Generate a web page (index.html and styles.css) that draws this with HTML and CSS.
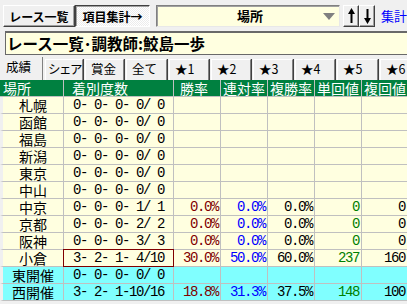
FILE: index.html
```html
<!DOCTYPE html>
<html lang="ja">
<head>
	<meta charset="UTF-8">
	<title>項目集計</title>
	<link rel="stylesheet" href="styles.css">
</head>
<body>
	<div class="toolbar">
		<button class="btn btn-list">レース一覧</button>
		<button class="btn btn-sum">項目集計→</button>
		<div class="combo">
			<span class="combo-text">場所</span>
			<svg class="combo-arrow" width="12" height="7" viewBox="0 0 12 7"><polygon points="0,0 12,0 6,7" fill="#808080"/></svg>
		</div>
		<button class="btn btn-arrow"><svg width="13" height="20" viewBox="0 0 13 20"><polygon points="6.5,2 10,8 7.5,8 7.5,17 5.5,17 5.5,8 3,8" fill="#000"/></svg></button>
		<button class="btn btn-arrow"><svg width="13" height="20" viewBox="0 0 13 20"><polygon points="6.5,18 10,12 7.5,12 7.5,3 5.5,3 5.5,12 3,12" fill="#000"/></svg></button>
		<span class="link">集計</span>
	</div>

	<div class="title">レース一覧･調教師:鮫島一歩</div>

	<ul class="tabs">
		<li class="tab active w43">成績</li>
		<li class="tab w38 narrow">シェア</li>
		<li class="tab w39">賞金</li>
		<li class="tab w41">全て</li>
		<li class="tab w40">★1</li>
		<li class="tab w40">★2</li>
		<li class="tab w40">★3</li>
		<li class="tab w40">★4</li>
		<li class="tab w41">★5</li>
		<li class="tab w40">★6</li>
	</ul>

	<div class="grid">
		<div class="row head">
			<div class="cell">場所</div>
			<div class="cell h-count">着別度数</div>
			<div class="cell h-win">勝率</div>
			<div class="cell">連対率</div>
			<div class="cell">複勝率</div>
			<div class="cell">単回値</div>
			<div class="cell">複回値</div>
		</div>
		<div class="row"><div class="cell place">札幌</div><div class="cell count">0- 0- 0- 0/ 0</div><div class="cell"></div><div class="cell"></div><div class="cell"></div><div class="cell"></div><div class="cell"></div></div>
		<div class="row"><div class="cell place">函館</div><div class="cell count">0- 0- 0- 0/ 0</div><div class="cell"></div><div class="cell"></div><div class="cell"></div><div class="cell"></div><div class="cell"></div></div>
		<div class="row"><div class="cell place">福島</div><div class="cell count">0- 0- 0- 0/ 0</div><div class="cell"></div><div class="cell"></div><div class="cell"></div><div class="cell"></div><div class="cell"></div></div>
		<div class="row"><div class="cell place">新潟</div><div class="cell count">0- 0- 0- 0/ 0</div><div class="cell"></div><div class="cell"></div><div class="cell"></div><div class="cell"></div><div class="cell"></div></div>
		<div class="row"><div class="cell place">東京</div><div class="cell count">0- 0- 0- 0/ 0</div><div class="cell"></div><div class="cell"></div><div class="cell"></div><div class="cell"></div><div class="cell"></div></div>
		<div class="row"><div class="cell place">中山</div><div class="cell count">0- 0- 0- 0/ 0</div><div class="cell"></div><div class="cell"></div><div class="cell"></div><div class="cell"></div><div class="cell"></div></div>
		<div class="row"><div class="cell place">中京</div><div class="cell count">0- 0- 0- 1/ 1</div><div class="cell num red">0.0%</div><div class="cell num blue">0.0%</div><div class="cell num">0.0%</div><div class="cell num green">0</div><div class="cell num">0</div></div>
		<div class="row"><div class="cell place">京都</div><div class="cell count">0- 0- 0- 2/ 2</div><div class="cell num red">0.0%</div><div class="cell num blue">0.0%</div><div class="cell num">0.0%</div><div class="cell num green">0</div><div class="cell num">0</div></div>
		<div class="row"><div class="cell place">阪神</div><div class="cell count">0- 0- 0- 3/ 3</div><div class="cell num red">0.0%</div><div class="cell num blue">0.0%</div><div class="cell num">0.0%</div><div class="cell num green">0</div><div class="cell num">0</div></div>
		<div class="row"><div class="cell place">小倉</div><div class="cell count selected">3- 2- 1- 4/10</div><div class="cell num red">30.0%</div><div class="cell num blue">50.0%</div><div class="cell num">60.0%</div><div class="cell num green">237</div><div class="cell num">160</div></div>
		<div class="row total"><div class="cell place">東開催</div><div class="cell count">0- 0- 0- 0/ 0</div><div class="cell"></div><div class="cell"></div><div class="cell"></div><div class="cell"></div><div class="cell"></div></div>
		<div class="row total"><div class="cell place">西開催</div><div class="cell count">3- 2- 1-10/16</div><div class="cell num red">18.8%</div><div class="cell num blue">31.3%</div><div class="cell num">37.5%</div><div class="cell num green">148</div><div class="cell num">100</div></div>
	</div>
</body>
</html>
```

FILE: styles.css
```css
*{
	margin: 0;
	padding: 0;
	box-sizing: border-box;
	list-style: none;
}
body{
	width: 407px;
	height: 304px;
	overflow: hidden;
	background-color: #f0f0f0;
	font-family: "Noto Sans CJK JP", sans-serif;
	color: #000;
}

/* toolbar */
.toolbar{
	display: flex;
	align-items: flex-start;
	height: 31px;
	padding: 5px 0 0 3px;
	white-space: nowrap;
}
.btn{
	height: 22px;
	padding: 0;
	background-color: #f0f0f0;
	border: 1px solid;
	border-color: #fff #404040 #404040 #fff;
	box-shadow: inset -1px -1px #a0a0a0;
	font: bold 12px/19px "Noto Sans CJK JP", sans-serif;
	color: #000;
}
.btn-list{
	width: 73px;
}
.btn-sum{
	width: 77px;
	border-color: #404040 #fff #fff #404040;
	box-shadow: inset 1px 1px #a0a0a0;
	background: repeating-conic-gradient(#fff 0 25%, #ececec 0 50%) 0 0/2px 2px;
}
.combo{
	display: flex;
	align-items: center;
	width: 187px;
	height: 22px;
	margin-left: 6px;
	padding-left: 19px;
	background-color: #ffffe0;
	border: 1px solid;
	border-color: #808080 #e8e8e8 #e8e8e8 #808080;
	box-shadow: inset 1px 1px #a0a0a0;
}
.combo-text{
	flex: 1;
	text-align: center;
	font-weight: bold;
	font-size: 13px;
	line-height: 18px;
}
.combo-arrow{
	margin-right: 4px;
}
.btn-arrow{
	width: 16px;
	display: flex;
	align-items: center;
	justify-content: center;
}
.btn-arrow:nth-of-type(3){
	margin-left: 3px;
}
.link{
	margin-left: 6px;
	color: #0000ff;
	font-size: 13px;
	line-height: 21px;
}

/* title */
.title{
	height: 24px;
	margin-left: 5px;
	padding-left: 1px;
	background-color: #ffffe0;
	border: 1px solid #696969;
	border-top-width: 2px;
	border-right: none;
	font-weight: bold;
	font-size: 15.5px;
	line-height: 20px;
	white-space: nowrap;
}

/* tabs */
.tabs{
	display: flex;
	align-items: flex-end;
	height: 23px;
	margin-top: 2px;
	white-space: nowrap;
}
.tab{
	height: 21px;
	margin-right: 2px;
	padding: 1px 0 0 5px;
	border-top: 1px solid #fff;
	border-left: 1px solid #fff;
	border-right: 1px solid #808080;
	box-shadow: 1px 0 #404040;
	font-size: 12.5px;
	line-height: 15px;
	flex-shrink: 0;
}
.tab.active{
	height: 23px;
	padding-top: 2px;
	padding-left: 6px;
	border-top: none;
	border-left: none;
	box-shadow: none;
}
.tab.narrow{
	padding-left: 2px;
	letter-spacing: -1.5px;
}
.w38{ width: 38px; }
.w39{ width: 39px; }
.w40{ width: 40px; }
.w41{ width: 41px; }
.w43{ width: 43px; }

/* grid */
.row{
	display: grid;
	grid-template-columns: 64px 110px 47px 47px 47px 47px 46px;
	height: 17px;
}
.cell{
	height: 17px;
	background-color: #ffffe0;
	border-right: 1px solid #c0c0c0;
	border-bottom: 1px solid #c0c0c0;
	white-space: pre;
	font-size: 13px;
	line-height: 16px;
}
.row .cell:first-child{
	border-left: 3px solid #f0f0f0;
}
.row.total .cell{
	background-color: #80ffff;
}
.row.head .cell{
	background-color: #008040;
	color: #fff;
	font-size: 14px;
	padding-left: 2px;
}
.row.head .cell:first-child{
	border-left: none;
	padding-left: 3px;
}
.row.head .h-count{
	padding-left: 8px;
}
.row.head .h-win{
	padding-left: 6px;
}
.place{
	text-align: center;
	font-size: 14px;
}
.count, .num{
	font-family: "Liberation Mono", monospace;
	font-size: 14px;
	letter-spacing: -1.4px;
}
.count{
	text-align: center;
	position: relative;
}
.num{
	text-align: right;
	padding-right: 2px;
}
.red{ color: #800000; }
.blue{ color: #0000ff; }
.green{ color: #008000; }
.selected:after{
	content: '';
	position: absolute;
	top: -1px;
	left: -1px;
	right: -1px;
	bottom: -1px;
	border: 1px solid #800000;
}
```
